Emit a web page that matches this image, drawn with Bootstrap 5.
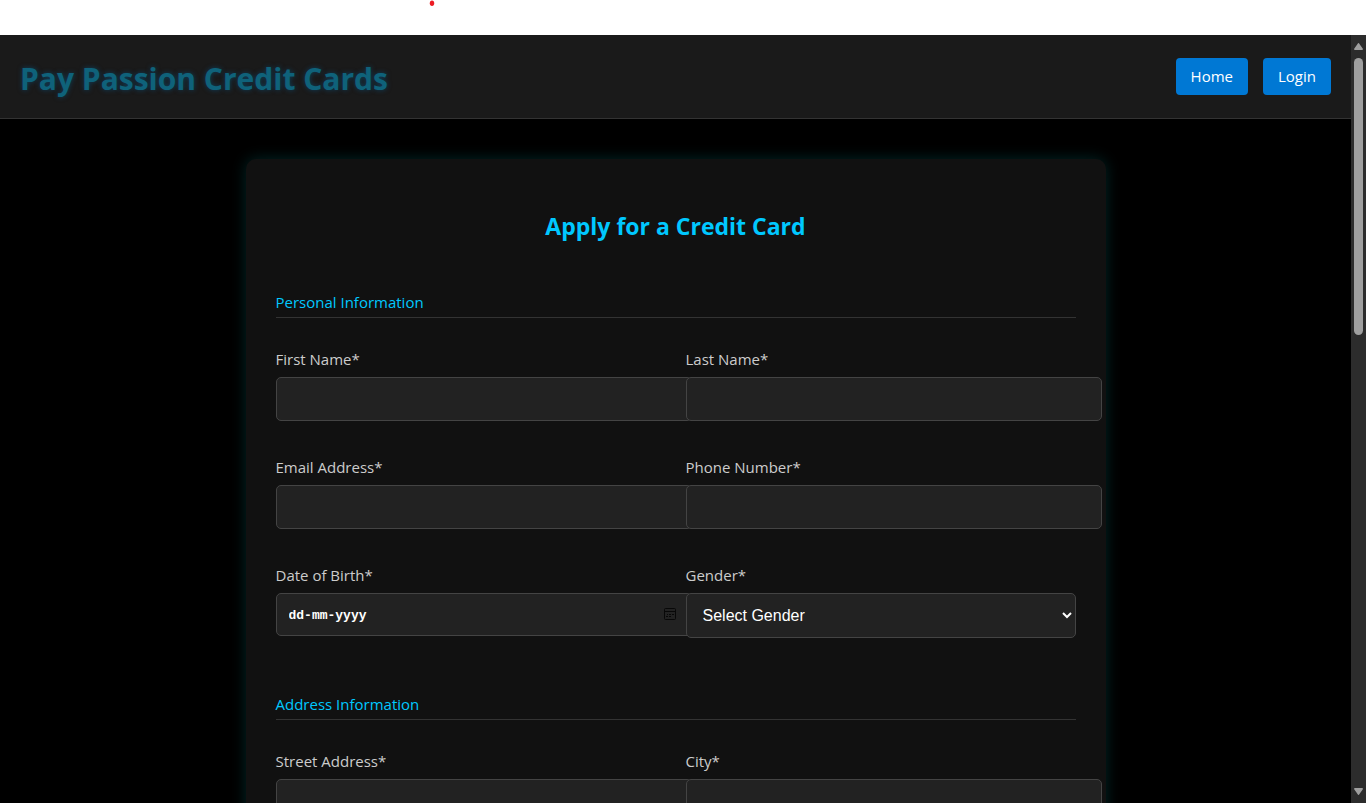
<!DOCTYPE html>
<html lang="en">
<head>
<meta charset="utf-8">
<meta name="viewport" content="width=device-width, initial-scale=1">
<title>Pay Passion Credit Cards</title>
<link rel="stylesheet" href="https://cdn.jsdelivr.net/npm/bootstrap@5.3.0/dist/css/bootstrap.min.css">
<style>
  body { font-family: "Open Sans", "Noto Sans", sans-serif; font-size: 15px; line-height: 21px; color: #ccc; background: #000; }
  .top-strip { height: 35px; background: #fff; padding-left: 429px; }
  .top-strip svg { display: block; }
  .site-header { background: #1a1a1a; border-bottom: 1px solid #333; padding: 22px 20px 18px; }
  .brand-title { font-size: 30px; line-height: 43px; font-weight: 700; color: #0f627a; text-shadow: 0 0 5px rgba(0, 100, 160, .5); }
  .site-nav { gap: 15px; margin-bottom: 4px; }
  .nav-btn { background: #0078d4; color: #fff; padding: 8px 15px; border-radius: 4px; font-size: 15px; line-height: 21px; }
  .nav-btn:hover { background: #005ea6; color: #fff; }
  .apply-panel { width: 860px; max-width: 100%; margin: 40px auto; padding: 49px 30px; background: #111; border-radius: 10px; box-shadow: 0 0 15px rgba(0, 255, 255, .15); }
  .apply-title { font-size: 23px; line-height: 36px; font-weight: 700; color: #00c8ff; margin-bottom: 48px; }
  .form-part { margin-bottom: 56px; }
  .part-title { font-size: 15px; line-height: 21px; color: #00c8ff; border-bottom: 1px solid #333; padding-bottom: 4px; margin-bottom: 31px; }
  .field-grid { display: grid; grid-template-columns: 1fr 1fr; column-gap: 20px; row-gap: 36px; }
  .field-grid label { display: block; line-height: 21px; margin-bottom: 7px; }
  .field { min-width: 0; }
  .field-box { display: block; width: 100%; box-sizing: content-box; height: 18px; padding: 12px; background: #222; border: 1px solid #444; border-radius: 5px; color: #fff; font-family: "Liberation Sans", sans-serif; font-size: 16px; line-height: 18px; position: relative; }
  .date-wrap { position: relative; width: calc(100% + 26px); }
  .date-wrap .field-box { box-sizing: border-box; height: 43px; padding: 13px 12px 11px; font-family: "Liberation Mono", monospace; font-weight: 700; font-size: 13px; }
  .date-box::placeholder { color: #fff; opacity: 1; }
  .date-icon { position: absolute; right: 15px; top: 14px; }
  select.field-box { box-sizing: border-box; height: 45px; }
  .scroll-rail { width: 15px; background: #2c2c2c; padding: 8px 0 8px 3px; }
  .scroll-thumb { width: 9px; height: 36.8%; background: #9f9f9f; border-radius: 5px; margin-top: 7px; }
</style>
</head>
<body class="vh-100 overflow-hidden d-flex flex-column">
  <div class="top-strip flex-shrink-0">
    <svg width="6" height="6" viewBox="0 0 6 6" aria-hidden="true"><ellipse cx="3" cy="3.200" rx="2.200" ry="2.700" fill="#ed1c24"/></svg>
  </div>
  <div class="d-flex flex-grow-1 overflow-hidden">
    <div class="flex-grow-1 overflow-hidden">
      <header class="site-header d-flex justify-content-between align-items-center">
        <h1 class="brand-title mb-0">Pay Passion Credit Cards</h1>
        <nav class="site-nav d-flex">
          <a class="nav-btn text-decoration-none" href="#">Home</a>
          <a class="nav-btn text-decoration-none" href="#">Login</a>
        </nav>
      </header>
      <main>
        <form class="apply-panel">
          <h2 class="apply-title text-center">Apply for a Credit Card</h2>
          <section class="form-part">
            <h3 class="part-title fw-normal">Personal Information</h3>
            <div class="field-grid">
              <div class="field"><label for="first">First Name*</label><input class="field-box" id="first" type="text"></div>
              <div class="field"><label for="last">Last Name*</label><input class="field-box" id="last" type="text"></div>
              <div class="field"><label for="email">Email Address*</label><input class="field-box" id="email" type="email"></div>
              <div class="field"><label for="phone">Phone Number*</label><input class="field-box" id="phone" type="tel"></div>
              <div class="field"><label for="dob">Date of Birth*</label>
                <div class="date-wrap">
                  <input class="field-box date-box" id="dob" type="text" placeholder="dd-mm-yyyy">
                  <svg class="date-icon" width="14" height="14" viewBox="0 0 14 14" fill="none" stroke="#080808" aria-hidden="true"><rect x="1.500" y="1.500" width="11" height="11" rx="1"/><path d="M1.500 4.500h11M6 7.500h2M9 7.500h2M3 9.500h2M6 9.500h2M4 7.500h1"/></svg>
                </div>
              </div>
              <div class="field"><label for="gender">Gender*</label>
                <select class="field-box" id="gender"><option>Select Gender</option><option>Female</option><option>Male</option><option>Other</option></select></div>
            </div>
          </section>
          <section class="form-part">
            <h3 class="part-title fw-normal">Address Information</h3>
            <div class="field-grid">
              <div class="field"><label for="street">Street Address*</label><input class="field-box" id="street" type="text"></div>
              <div class="field"><label for="city">City*</label><input class="field-box" id="city" type="text"></div>
            </div>
          </section>
        </form>
      </main>
    </div>
    <div class="scroll-rail flex-shrink-0 d-flex flex-column" aria-hidden="true">
      <svg width="9" height="8" viewBox="0 0 9 8"><path d="M4.500 0Q5 0 5.500 1L9 6Q9 7 8 7H1Q0 7 0 6L3.500 1Q4 0 4.500 0z" fill="#9f9f9f"/></svg>
      <div class="scroll-thumb"></div>
      <svg class="mt-auto" width="9" height="8" viewBox="0 0 9 8"><path d="M4.500 8Q5 8 5.500 7L9 2Q9 1 8 1H1Q0 1 0 2L3.500 7Q4 8 4.500 8z" fill="#9f9f9f"/></svg>
    </div>
  </div>
<script src="https://cdn.jsdelivr.net/npm/bootstrap@5.3.0/dist/js/bootstrap.bundle.min.js"></script>
</body>
</html>
